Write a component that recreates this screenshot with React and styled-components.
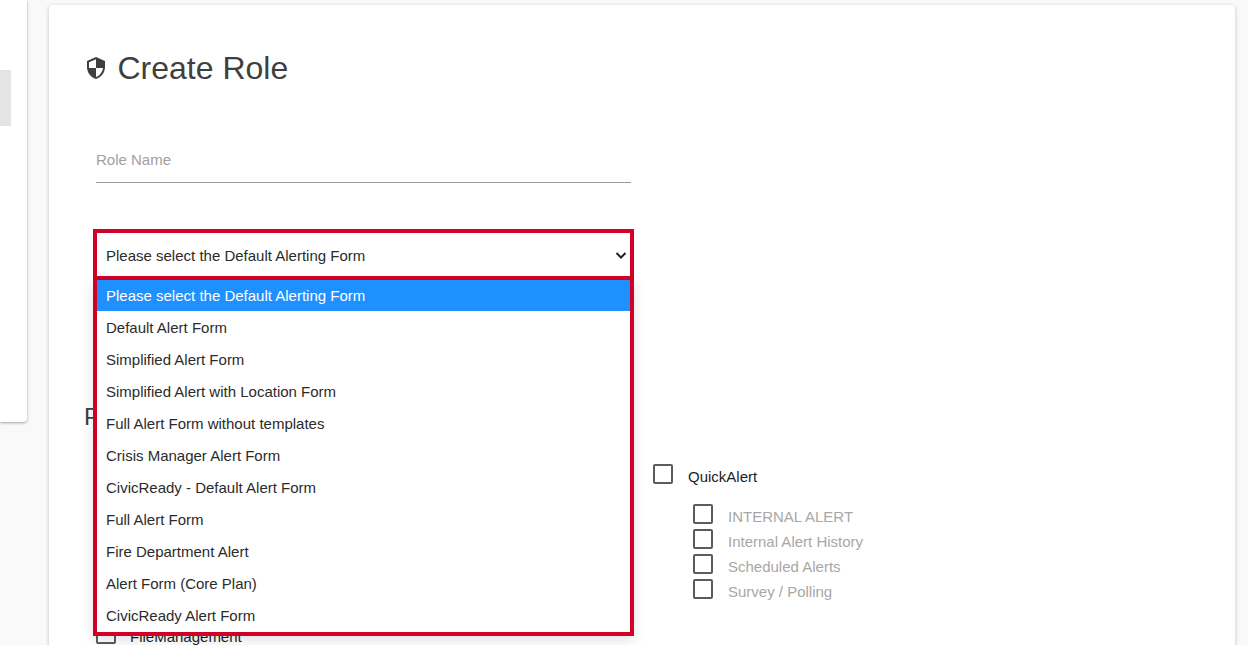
import React from "react";
import styled, { createGlobalStyle } from "styled-components";

const Global = createGlobalStyle`
  html, body { margin: 0; padding: 0; height: 100%; background: #f9f9f9; }
  body { font-family: "Liberation Sans", Arial, sans-serif; overflow: hidden; }
  * { box-sizing: border-box; }
`;

const Page = styled.div`
  display: flex;
  align-items: flex-start;
  height: 645px;
  overflow: hidden;
  background: #f9f9f9;
`;

const Sidebar = styled.aside`
  flex: none;
  width: 27px;
  height: 422px;
  padding-top: 70px;
  background: #fff;
  border-bottom-right-radius: 4px;
  box-shadow: 0 1px 3px rgba(0, 0, 0, 0.35);
`;

const SidebarItem = styled.div`
  width: 11px;
  height: 56px;
  background: #e4e4e4;
`;

const Card = styled.main`
  flex: none;
  width: 1186px;
  height: 900px;
  margin: 5px 0 0 22px;
  padding: 42px 0 0 35px;
  background: #fff;
  border-radius: 4px;
  box-shadow: 0 1px 4px rgba(0, 0, 0, 0.22);
`;

const TitleRow = styled.header`
  display: flex;
  align-items: center;
  gap: 9.5px;
  height: 42px;
`;

const Title = styled.h1`
  margin: 0;
  font-size: 32px;
  font-weight: 400;
  line-height: 42px;
  color: #3f3f3f;
`;

const NameInput = styled.input`
  display: block;
  width: 535px;
  height: 46px;
  margin: 48px 0 0 12px;
  padding: 0;
  border: 0;
  border-bottom: 1px solid #999;
  outline: 0;
  font: 15px "Liberation Sans", Arial, sans-serif;
  color: #333;
  background: transparent;
  &::placeholder { color: #a3a09e; opacity: 1; }
`;

const SelectWrap = styled.div`
  position: relative;
  width: 541px;
  margin: 46px 0 0 9px;
`;

const SelectBox = styled.div`
  display: flex;
  align-items: center;
  justify-content: space-between;
  height: 51px;
  padding: 1px 1px 0 9px;
  border: 4px solid #d00026;
  background: #fff;
  font-size: 15px;
  color: #2b2b2b;
`;

const Dropdown = styled.ul`
  position: absolute;
  top: 100%;
  left: 0;
  z-index: 2;
  width: 100%;
  margin: 0;
  padding: 0;
  list-style: none;
  border: 4px solid #d00026;
  border-top: 0;
  background: #fff;
  box-shadow: 0 4px 12px rgba(0, 0, 0, 0.12);
`;

const Option = styled.li`
  height: 32px;
`;

const OptionLabel = styled.span`
  display: block;
  height: ${(p) => (p.$active ? "31px" : "32px")};
  padding-left: 9px;
  line-height: 32px;
  font-size: 15px;
  color: ${(p) => (p.$active ? "#fff" : "#2b2b2b")};
  background: ${(p) => (p.$active ? "#1e90ff" : "#fff")};
`;

const SectionTitle = styled.h2`
  margin: 123px 0 0;
  font-size: 24px;
  font-weight: 400;
  line-height: 28px;
  color: #3f3f3f;
`;

const Columns = styled.div`
  display: grid;
  grid-template-columns: 557px 1fr;
  margin: 33px 0 0 12px;
`;

const LeftColumn = styled.div`
  padding-top: 160px;
`;

const Row = styled.label`
  display: flex;
  align-items: flex-start;
  gap: ${(p) => (p.$tight ? "14px" : "15px")};
  height: 20px;
  font-size: 15px;
  line-height: 20px;
  color: ${(p) => (p.$muted ? "#a9a7a5" : "#1d1d1d")};
`;

const RowText = styled.span`
  padding-top: 3px;
`;

const Box = styled.span`
  flex: none;
  width: 20px;
  height: 20px;
  border: 2px solid #5c5c5c;
  border-radius: 2px;
  background: #fff;
`;

const SubList = styled.div`
  display: flex;
  flex-direction: column;
  gap: 5px;
  margin: 20px 0 0 40px;
`;

const options = [
  "Please select the Default Alerting Form",
  "Default Alert Form",
  "Simplified Alert Form",
  "Simplified Alert with Location Form",
  "Full Alert Form without templates",
  "Crisis Manager Alert Form",
  "CivicReady - Default Alert Form",
  "Full Alert Form",
  "Fire Department Alert",
  "Alert Form (Core Plan)",
  "CivicReady Alert Form",
];

const subItems = ["INTERNAL ALERT", "Internal Alert History", "Scheduled Alerts", "Survey / Polling"];

export default function App() {
  return (
    <Page>
      <Global />
      <Sidebar>
        <SidebarItem />
      </Sidebar>
      <Card>
        <TitleRow>
          <svg width="24" height="24" viewBox="0 0 24 24" fill="#3f3f3f" aria-hidden="true">
            <path d="M12 1L3 5v6c0 5.55 3.84 10.74 9 12 5.16-1.26 9-6.45 9-12V5l-9-4zm0 10.99h7c-.53 4.12-3.28 7.79-7 8.94V12H5V6.3l7-3.11v8.8z" />
          </svg>
          <Title>Create Role</Title>
        </TitleRow>
        <NameInput placeholder="Role Name" />
        <SelectWrap>
          <SelectBox>
            Please select the Default Alerting Form
            <svg width="16" height="16" viewBox="0 0 16 16" fill="none" stroke="#222" strokeWidth="2" aria-hidden="true">
              <path d="M3.5 6l4.500 4.500L12.500 6" />
            </svg>
          </SelectBox>
          <Dropdown>
            {options.map((o, i) => (
              <Option key={o}>
                <OptionLabel $active={i === 0}>{o}</OptionLabel>
              </Option>
            ))}
          </Dropdown>
        </SelectWrap>
        <SectionTitle>Permissions</SectionTitle>
        <Columns>
          <LeftColumn>
            <Row $tight>
              <Box />
              <RowText>FileManagement</RowText>
            </Row>
          </LeftColumn>
          <div>
            <Row>
              <Box />
              <RowText>QuickAlert</RowText>
            </Row>
            <SubList>
              {subItems.map((s) => (
                <Row key={s} $muted>
                  <Box />
                  <RowText>{s}</RowText>
                </Row>
              ))}
            </SubList>
          </div>
        </Columns>
      </Card>
    </Page>
  );
}
